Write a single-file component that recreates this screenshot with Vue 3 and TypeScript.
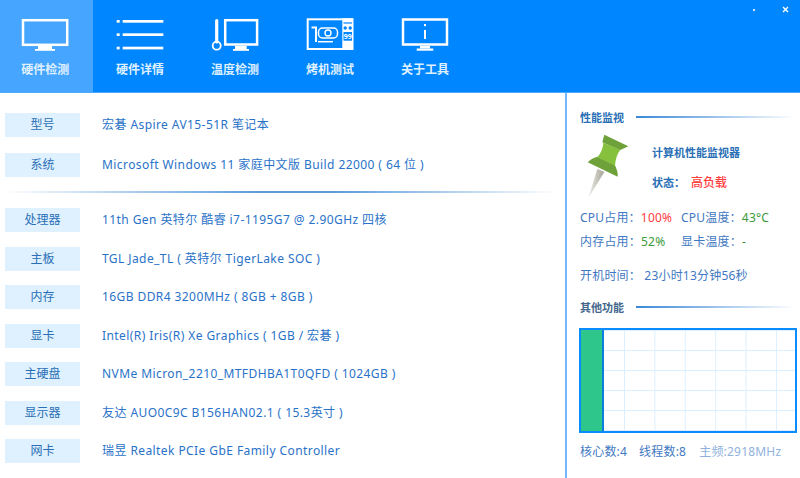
<template>
  <div class="app">
    <header class="topbar">
      <div v-for="(tab, i) in tabs" :key="tab.name" class="tab" :class="{ active: i === 0 }">
        <svg class="tab-icon" width="60" height="44" viewBox="0 0 60 44">
          <g v-if="tab.icon === 'monitor'" fill="#fff">
            <rect x="8" y="5.200" width="44.200" height="24.600" fill="none" stroke="#fff" stroke-width="2.500" />
            <rect x="23" y="31" width="14" height="3" />
            <rect x="20" y="34" width="20" height="1.800" />
          </g>
          <g v-else-if="tab.icon === 'list'" fill="#fff">
            <rect x="6.700" y="5" width="3" height="2.700" />
            <rect x="12.700" y="5" width="40.600" height="2.700" />
            <rect x="6.700" y="18.300" width="3" height="2.700" />
            <rect x="12.700" y="18.300" width="40.600" height="2.700" />
            <rect x="6.700" y="31.700" width="3" height="2.700" />
            <rect x="12.700" y="31.700" width="40.600" height="2.700" />
          </g>
          <g v-else-if="tab.icon === 'temp'" fill="#fff">
            <rect x="20.200" y="5.200" width="31.900" height="24.300" fill="none" stroke="#fff" stroke-width="2.500" />
            <rect x="30" y="31" width="11.700" height="3" />
            <rect x="28" y="34" width="16" height="1.800" />
            <path d="M11.700 5.500V27" fill="none" stroke="#fff" stroke-width="3.200" stroke-linecap="round" />
            <circle cx="11.700" cy="30.700" r="4" fill="none" stroke="#fff" stroke-width="1.800" />
          </g>
          <g v-else-if="tab.icon === 'burn'" fill="none" stroke="#fff">
            <rect x="7.700" y="4.300" width="44.600" height="29.700" stroke-width="2" />
            <rect x="42.300" y="3.300" width="11" height="31.700" fill="#fff" stroke="none" />
            <path d="M43.500 8h8.500" stroke="#0086ff" stroke-width="1.200" />
            <circle cx="45.200" cy="13" r="1.700" fill="#0086ff" stroke="none" />
            <circle cx="50.200" cy="13" r="1.700" fill="#0086ff" stroke="none" />
            <rect x="43.500" y="17" width="8.500" height="8.700" fill="#0086ff" stroke="none" />
            <text x="47.750" y="24" text-anchor="middle" class="icon-digits">99</text>
            <path d="M11.500 12.500h4.500v14.500" stroke-width="2" />
            <rect x="18.500" y="13" width="19" height="10" rx="4" stroke-width="1.500" />
            <circle cx="28" cy="18" r="3" stroke-width="1.400" />
            <path d="M18 26.700h15" stroke-width="1.500" />
          </g>
          <g v-else fill="#fff">
            <rect x="8" y="4.500" width="44" height="25" fill="none" stroke="#fff" stroke-width="2.500" />
            <rect x="25" y="31" width="10" height="2.500" />
            <rect x="21.700" y="33.500" width="16.600" height="2.200" />
            <rect x="29" y="9" width="2" height="2.200" />
            <rect x="29" y="15" width="2" height="9" />
          </g>
        </svg>
        <span class="tab-name">{{ tab.name }}</span>
      </div>
      <div class="win-btns">
        <i class="win-min"></i>
        <svg width="7" height="7" viewBox="0 0 7 7"><path d="M1 1l5 5M6 1l-5 5" stroke="#fff" stroke-width="1.400" /></svg>
      </div>
    </header>

    <main class="body">
      <section class="hw-list">
        <div v-for="row in topRows" :key="row.label" class="hw-row">
          <span class="hw-label">{{ row.label }}</span>
          <span class="hw-value">{{ row.value }}</span>
        </div>
        <div class="hw-divider"></div>
        <div class="hw-rows">
          <div v-for="row in rows" :key="row.label" class="hw-row">
            <span class="hw-label">{{ row.label }}</span>
            <span class="hw-value">{{ row.value }}</span>
          </div>
        </div>
      </section>

      <aside class="side">
        <div class="side-title">
          <b>性能监视</b>
          <i class="side-line"></i>
        </div>
        <div class="monitor">
          <svg class="pin" width="48" height="68" viewBox="60 115 144 204">
            <defs>
              <linearGradient id="needle" x1="0" y1="0" x2="1" y2="0">
                <stop offset="0" stop-color="#f1f0ea" />
                <stop offset="1" stop-color="#a5a396" />
              </linearGradient>
            </defs>
            <path d="M70 310L97 222 118 232z" fill="url(#needle)" />
            <path d="M68 203C76 194 86 189 97 186L150 212C154 222 160 234 158 246z" fill="#6fa13a" />
            <path d="M97 187C106 178 114 162 115 144L166 165C156 178 151 196 150 213z" fill="#85c13c" />
            <path d="M112 143L118 120 190 155 166 166z" fill="#6fa13a" />
          </svg>
          <div class="monitor-text">
            <b>计算机性能监视器</b>
            <div class="status"><b>状态：</b><span>高负载</span></div>
          </div>
        </div>
        <div class="stats">
          <div class="stat-row">
            <span class="stat w1">CPU占用：<em class="red">100%</em></span>
            <span class="stat">CPU温度：<em class="green">43°C</em></span>
          </div>
          <div class="stat-row">
            <span class="stat w1">内存占用：<em class="green">52%</em></span>
            <span class="stat">显卡温度：<em class="green">-</em></span>
          </div>
          <div class="uptime">开机时间： 23小时13分钟56秒</div>
        </div>
        <div class="side-title second">
          <b>其他功能</b>
          <i class="side-line"></i>
        </div>
        <div class="chart">
          <div class="chart-bar"></div>
          <div class="chart-grid"></div>
        </div>
        <div class="cpu-info">
          <span>核心数:4</span>
          <span>线程数:8</span>
          <span class="faded">主频:2918MHz</span>
        </div>
      </aside>
    </main>
  </div>
</template>

<script setup lang="ts">
const tabs = [
  { name: '硬件检测', icon: 'monitor' },
  { name: '硬件详情', icon: 'list' },
  { name: '温度检测', icon: 'temp' },
  { name: '烤机测试', icon: 'burn' },
  { name: '关于工具', icon: 'info' },
]

const topRows = [
  { label: '型号', value: '宏碁 Aspire AV15-51R 笔记本' },
  { label: '系统', value: 'Microsoft Windows 11 家庭中文版 Build 22000 ( 64 位 )' },
]

const rows = [
  { label: '处理器', value: '11th Gen 英特尔 酷睿 i7-1195G7 @ 2.90GHz 四核' },
  { label: '主板', value: 'TGL Jade_TL ( 英特尔 TigerLake SOC )' },
  { label: '内存', value: '16GB DDR4 3200MHz ( 8GB + 8GB )' },
  { label: '显卡', value: 'Intel(R) Iris(R) Xe Graphics ( 1GB / 宏碁 )' },
  { label: '主硬盘', value: 'NVMe Micron_2210_MTFDHBA1T0QFD ( 1024GB )' },
  { label: '显示器', value: '友达 AUO0C9C B156HAN02.1 ( 15.3英寸 )' },
  { label: '网卡', value: '瑞昱 Realtek PCIe GbE Family Controller' },
]
</script>

<style>
html,
body {
  margin: 0;
  background: #fff;
}
</style>

<style scoped>
.app {
  width: 800px;
  height: 478px;
  overflow: hidden;
  display: flex;
  flex-direction: column;
  background: #fff;
  font-family: "Noto Sans", "Noto Sans CJK SC", sans-serif;
  font-size: 12px;
  color: #2a6fc0;
}

.topbar {
  position: relative;
  flex: none;
  height: 93px;
  display: flex;
  box-sizing: border-box;
  background: #0086ff;
  border-bottom: 1px solid #4da8ff;
}

.tab {
  width: 95px;
  display: flex;
  flex-direction: column;
  align-items: center;
  padding-top: 15px;
  box-sizing: border-box;
  color: #dff0ff;
}

.tab:first-child {
  width: 92.500px;
  padding-right: 2px;
}

.tab.active {
  background: #46a5ff;
}

.tab-icon {
  display: block;
}

.icon-digits {
  fill: #fff;
  stroke: none;
  font-size: 7px;
  font-weight: 700;
}

.tab-name {
  margin-top: 2px;
  font-weight: 700;
  line-height: 18px;
}

.win-btns {
  position: absolute;
  top: 6px;
  right: 11px;
  display: flex;
  align-items: center;
  gap: 27px;
}

.win-min {
  width: 2px;
  height: 2px;
  background: #cfe8ff;
}

.win-btns svg {
  display: block;
}

.body {
  flex: 1;
  display: flex;
  min-height: 0;
}

.hw-list {
  width: 565px;
  flex: none;
  box-sizing: border-box;
  padding: 20px 0 0 5px;
}

.hw-row {
  display: flex;
  align-items: center;
  height: 24px;
  margin-bottom: 16px;
}

.hw-rows {
  display: flex;
  flex-direction: column;
  gap: 14.500px;
}

.hw-rows .hw-row {
  margin-bottom: 0;
}

.hw-label {
  width: 75px;
  height: 24px;
  line-height: 23px;
  text-align: center;
  background: #dff1ff;
  color: #2a6fb5;
}

.hw-value {
  margin-left: 22px;
  padding-bottom: 2px;
  color: #2a72c8;
  letter-spacing: 0.420px;
  white-space: nowrap;
}

.hw-divider {
  height: 1.500px;
  margin: -2px 0 15.500px;
  width: 552px;
  background: linear-gradient(90deg, #fff 0%, #5d9ddc 45%, #5d9ddc 60%, #fff 100%);
}

.side {
  flex: 1;
  box-sizing: border-box;
  border-left: 2px solid #74b8ff;
  padding: 16px 0 0 13px;
}

.side-title {
  display: flex;
  align-items: center;
  height: 16px;
  font-size: 11px;
  color: #2a6fb5;
}

.side-title.second {
  margin-top: 13px;
  color: #44668c;
}

.side-title b {
  width: 56px;
}

.side-line {
  flex: none;
  width: 160px;
  height: 1.500px;
  background: linear-gradient(90deg, #3a88d8, #fff);
}

.monitor {
  display: flex;
  height: 70px;
  margin-top: 2px;
}

.pin {
  flex: none;
  margin: 6px 0 0 5px;
}

.monitor-text {
  margin-left: 19px;
  padding-top: 18px;
  font-size: 11px;
  color: #2a6fb5;
}

.monitor-text b {
  display: block;
  line-height: 16px;
}

.status {
  display: flex;
  margin-top: 14px;
  line-height: 16px;
}

.status b {
  width: 39px;
}

.status span {
  color: #ff4040;
  font-weight: 500;
  font-size: 12px;
}

.stats {
  margin-top: 9px;
  color: #3f78c2;
}

.stat-row {
  display: flex;
  height: 24px;
  line-height: 24px;
}

.stat {
  letter-spacing: 0.200px;
  white-space: nowrap;
}

.w1 {
  width: 101px;
}

em {
  font-style: normal;
}

.red {
  color: #ff4040;
}

.green {
  color: #3c9a3c;
}

.uptime {
  margin-top: 12px;
  line-height: 20px;
  letter-spacing: 0.200px;
}

.chart {
  display: flex;
  width: 218px;
  height: 105px;
  margin-top: 13px;
  margin-left: -1px;
  box-sizing: border-box;
  border: 2px solid #0a8cff;
  overflow: hidden;
}

.chart-bar {
  width: 21px;
  flex: none;
  background: #2ec68a;
  border-right: 2px solid #0a7fe0;
}

.chart-grid {
  flex: 1;
  background-color: #fff;
  background-image:
    linear-gradient(#dcefff 1px, transparent 1px),
    linear-gradient(90deg, #dcefff 1px, transparent 1px);
  background-size: 30.400px 20px;
  background-position: 20px 20px;
}

.cpu-info {
  display: flex;
  gap: 12px;
  margin-top: 10px;
  line-height: 18px;
  letter-spacing: 0.200px;
  color: #3f78c2;
  white-space: nowrap;
}

.faded {
  margin-left: 1px;
  color: #8fb2dd;
}
</style>
